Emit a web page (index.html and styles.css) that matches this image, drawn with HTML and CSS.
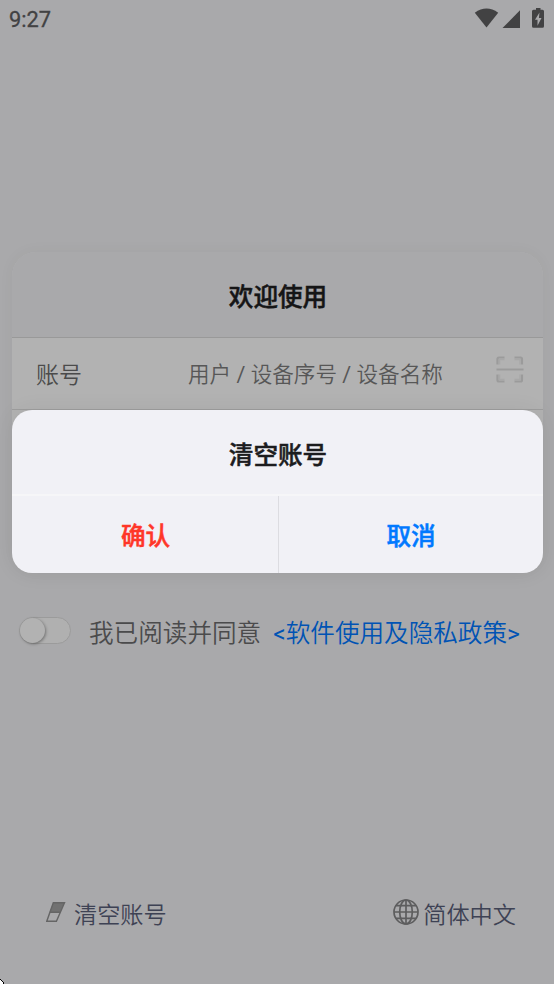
FILE: index.html
```html
<!DOCTYPE html>
<html lang="zh-CN">
<head>
<meta charset="utf-8">
<title>欢迎使用</title>
<link rel="stylesheet" href="styles.css">
</head>
<body>
<div class="screen">
  <header class="status">
    <span class="clock">9:27</span>
    <svg class="status-icons" width="72" height="22" viewBox="0 0 72 22" fill="#424243">
      <path d="M0.8 4.8Q12.5-3.6 24.2 4.8L12.5 19.5Z"/>
      <path d="M46 2.3V20H28.5Z"/>
      <path fill-rule="evenodd" d="M62 0h4.5v1.800h2q1.500 0 1.500 1.500v15q0 1.500-1.500 1.500h-9q-1.500 0-1.500-1.500v-15q0-1.500 1.500-1.500H62zM65.500 4.500l-4.500 7.300h2.500v6l4-7.800h-2.600z"/>
    </svg>
  </header>
  <main class="card">
    <h1 class="card-title">欢迎使用</h1>
    <div class="field">
      <span class="label">账号</span>
      <span class="placeholder">用户 <span class="mark">/</span> 设备序号 <span class="mark">/</span> 设备名称</span>
      <svg class="scan" width="28" height="28" viewBox="0 0 28 28" fill="none" stroke="#9b9b9b" stroke-width="2.200">
        <path d="M1.500 8.500V3q0-1.500 1.500-1.500h5.500M18.500 1.500h6q1.500 0 1.500 1.500v5.500M26 18.500v5.500q0 1.500-1.500 1.500h-6M8.500 25.500H3q-1.500 0-1.500-1.500v-5.500M.5 13.500h27"/>
        <path d="M3.500 8.500V3.500h5M18.500 3.500h5.500v5M24 18.500v5h-5.500M8.500 23.500h-5v-5" stroke="#a8a8a8" stroke-width="1.500"/>
      </svg>
    </div>
  </main>
  <section class="agreement">
    <span class="switch"><span class="knob"></span></span>
    <span class="agree-text">我已阅读并同意</span>
    <a class="policy"><span class="mark">&lt;</span>软件使用及隐私政策<span class="mark">&gt;</span></a>
  </section>
  <footer class="footer">
    <span class="action">
      <svg class="eraser" width="20" height="20" viewBox="0 0 20 20">
        <path d="M7.300.8h11.200l-4.400 9.500H3.500z" fill="#717171"/>
        <path d="M7.300.8h11.200l-8.100 18.400H.8zM4 10.200h10.200" fill="none" stroke="#656565" stroke-width="1.400"/>
      </svg>
      <span class="action-text">清空账号</span>
    </span>
    <span class="action">
      <svg class="globe" width="26" height="26" viewBox="0 0 26 26" fill="none" stroke="#5d5d5e" stroke-width="1.700">
        <circle cx="13" cy="13" r="12"/>
        <ellipse cx="13" cy="13" rx="6.300" ry="12"/>
        <path d="M13 1v24M1 13h24M3 6.600h20M3 19.400h20"/>
      </svg>
      <span class="action-text">简体中文</span>
    </span>
  </footer>
  <div class="dialog" role="dialog">
    <h2 class="dialog-title">清空账号</h2>
    <div class="buttons">
      <button class="button confirm">确认</button>
      <button class="button cancel">取消</button>
    </div>
  </div>
  <svg class="corner" width="5" height="5" viewBox="0 0 5 5" shape-rendering="crispEdges">
    <path d="M0 1h1v1h1v1h1v1h1v1H0z" fill="#fff"/>
    <path d="M0 0h1v1H0zM1 1h1v1H1zM2 2h1v1H2zM3 3h1v2H3z" fill="#000"/>
  </svg>
</div>
</body>
</html>
```
FILE: styles.css
```css
* { box-sizing: border-box; }
body {
  margin: 0;
  font-family: Roboto, "Noto Sans CJK SC", sans-serif;
  font-weight: 350;
  background: #a9a9ab;
}
.screen {
  position: relative;
  display: flex;
  flex-direction: column;
  width: 554px;
  height: 984px;
  overflow: hidden;
  background: #a9a9ab;
}
.status {
  display: flex;
  align-items: flex-start;
  justify-content: space-between;
  height: 252px;
  padding: 8px 8px 0 9px;
}
.clock {
  font: 400 21.8px/24px Roboto, sans-serif;
  -webkit-text-stroke: 0.3px;
  color: #424243;
}
.card {
  height: 321px;
  margin: 0 11px 0 12px;
  border-radius: 24px;
  background: #b2b2b2;
  box-shadow: 0 0 16px rgba(0, 0, 0, 0.04);
  overflow: hidden;
  flex: none;
}
.card-title {
  height: 86px;
  margin: 0;
  padding-left: 1px;
  border-bottom: 1px solid #999999;
  background: #a9a9ab;
  color: #151516;
  font-size: 24.6px;
  font-weight: 500;
  -webkit-text-stroke: 0.5px;
  line-height: 91px;
  text-align: center;
}
.field {
  display: flex;
  align-items: center;
  height: 72px;
  padding: 0 19px 0 24px;
  border-bottom: 1px solid #9d9d9d;
}
.label {
  width: 152px;
  padding-top: 5px;
  font-size: 23px;
  line-height: 34px;
  color: #4b4b4b;
}
.placeholder {
  flex: 1;
  padding-top: 2px;
  white-space: nowrap;
  font-size: 21.6px;
  line-height: 32px;
  color: #575757;
}
.mark { font-weight: 400; }
.scan { margin-bottom: 8px; }
.agreement {
  display: flex;
  align-items: center;
  height: 36px;
  margin-top: 40px;
  padding-left: 19px;
  font-size: 24.6px;
  line-height: 36px;
  white-space: nowrap;
}
.switch {
  width: 52px;
  height: 27px;
  margin: -1px 18px 0 0;
  border: 1px solid #9b9b9b;
  border-radius: 14px;
  background: #b0b0b0;
}
.knob {
  display: block;
  width: 25px;
  height: 25px;
  border-radius: 50%;
  background: #b2b2b2;
  box-shadow: 1px 1px 3px rgba(0, 0, 0, 0.35);
}
.agree-text {
  padding-top: 5px;
  color: #4b4b4c;
}
.policy {
  margin-left: 12px;
  padding-top: 5px;
  color: #0053b4;
}
.footer {
  display: flex;
  justify-content: space-between;
  margin: auto 38px 54px 46px;
  color: #3e4254;
  font-size: 23.2px;
  line-height: 34px;
}
.action {
  display: flex;
  align-items: center;
  height: 34px;
}
.action-text { padding-top: 3px; }
.eraser { margin: -2px 8px 0 0; }
.globe { margin: -2px 4px 0 0; }
.dialog {
  position: absolute;
  top: 410px;
  left: 12px;
  width: 531px;
  height: 163px;
  border-radius: 20px;
  background: #f1f1f6;
  box-shadow: 0 0 22px rgba(0, 0, 0, 0.06);
  overflow: hidden;
}
.dialog-title {
  height: 86px;
  margin: 0;
  padding-left: 1px;
  border-bottom: 2px solid #f6f6f8;
  font-size: 24.6px;
  font-weight: 500;
  -webkit-text-stroke: 0.5px;
  line-height: 91px;
  text-align: center;
  color: #1c1c1e;
}
.buttons {
  display: grid;
  grid-template-columns: 267px 1fr;
  height: 77px;
}
.button {
  padding: 0 0 1px;
  border: 0;
  background: none;
  font: 500 24.6px Roboto, "Noto Sans CJK SC", sans-serif;
  -webkit-text-stroke: 0.5px;
}
.confirm {
  padding-left: 1px;
  border-right: 1px solid #dcdce1;
  color: #ff3628;
}
.cancel { color: #0079ff; }
.corner {
  position: absolute;
  bottom: 0;
  left: 0;
}
```
